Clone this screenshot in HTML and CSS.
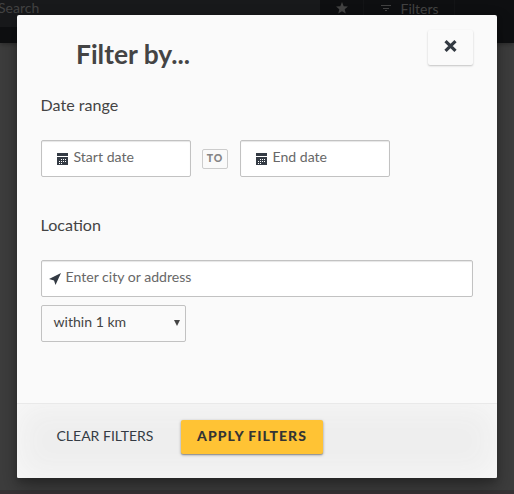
FILE: index.html
```
<!DOCTYPE html>
<html lang="en">
<head>
<meta charset="utf-8">
<title>Filters</title>
<link rel="stylesheet" href="styles.css">
</head>
<body>
<header class="topbar">
  <div class="search">Search</div>
  <div class="tool star"><svg width="12" height="12" viewBox="0 0 24 24"><path d="M12 0l3.400 8.300L24 9l-6.600 5.700L19.500 23 12 18.500 4.500 23l2.100-8.300L0 9l8.600-.7z"/></svg></div>
  <div class="tool filters"><svg width="10" height="8" viewBox="0 0 10 8"><path d="M0 1h10v1H0zM2 4h6v1H2zM4 6h2v1H4z"/></svg><span>Filters</span></div>
</header>
<div class="bottom-line"></div>
<main class="modal">
  <div class="body">
    <div class="heading">
      <h1>Filter by...</h1>
      <button class="close" aria-label="Close"><svg width="13" height="12" viewBox="0 0 13 12"><path d="M1.500 1.200L11.500 10.800M11.500 1.200L1.500 10.800"/></svg></button>
    </div>
    <h2>Date range</h2>
    <div class="dates">
      <div class="field date"><svg class="cal" width="11" height="12" viewBox="0 0 11 12"><path d="M0 0h11v3H0zM0 4h11v8H0z"/><path class="holes" d="M4 6h1v1H4zM6 6h1v1H6zM8 6h1v1H8zM2 8h1v1H2zM4 8h1v1H4zM6 8h1v1H6zM8 8h1v1H8zM2 10h1v1H2zM4 10h1v1H4z"/></svg><span>Start date</span></div>
      <span class="to">TO</span>
      <div class="field date"><svg class="cal" width="11" height="12" viewBox="0 0 11 12"><path d="M0 0h11v3H0zM0 4h11v8H0z"/><path class="holes" d="M4 6h1v1H4zM6 6h1v1H6zM8 6h1v1H8zM2 8h1v1H2zM4 8h1v1H4zM6 8h1v1H6zM8 8h1v1H8zM2 10h1v1H2zM4 10h1v1H4z"/></svg><span>End date</span></div>
    </div>
    <h2>Location</h2>
    <div class="field place"><svg class="arrow" width="12" height="12" viewBox="0 0 12 12"><path d="M12 0L6.500 12 5 7.400 0 6z"/></svg><span>Enter city or address</span></div>
    <div class="field distance"><span>within 1 km</span><svg width="6" height="6" viewBox="0 0 6 6"><path d="M0 0h6L3 6z"/></svg></div>
  </div>
  <footer>
    <button class="clear">CLEAR FILTERS</button>
    <button class="apply">APPLY FILTERS</button>
  </footer>
</main>
</body>
</html>
```
FILE: styles.css
```
* { box-sizing: border-box; }
body {
  margin: 0;
  width: 514px;
  height: 494px;
  overflow: hidden;
  position: relative;
  background: #3d3d3d;
  color: #444;
  font-family: Lato, sans-serif;
}
.topbar {
  display: flex;
  height: 43px;
  background: #0e0f11;
  color: #424242;
  box-shadow: 0 1px 5px rgba(0, 0, 0, .35);
}
.topbar svg { flex: none; fill: #424242; }
.search {
  flex: none;
  width: 322px;
  height: 27px;
  margin-left: -2px;
  background: #18191b;
  font-size: 14px;
  line-height: 16px;
}
.tool {
  flex: none;
  display: flex;
  height: 27px;
  border-right: 1px solid #131416;
  line-height: 18px;
  font-size: 14px;
}
.star { width: 44px; padding: 2px 0 0 16px; }
.filters { width: 91px; padding-left: 17px; }
.filters svg { margin-top: 4px; }
.filters span { margin-left: 9.500px; }
.bottom-line {
  position: absolute;
  left: 0;
  right: 0;
  bottom: 0;
  height: 4px;
  background: #383235;
  border-top: 1px solid #353535;
}
.modal {
  position: absolute;
  left: 17px;
  top: 15px;
  width: 480px;
  height: 463px;
  display: flex;
  flex-direction: column;
  overflow: hidden;
  border-radius: 2px;
  background: #fafafa;
  box-shadow: 0 10px 20px rgba(0, 0, 0, .3), 0 3px 6px rgba(0, 0, 0, .18);
}
.body { height: 388px; padding: 15px 24px 0; }
.heading { display: flex; justify-content: space-between; height: 65px; }
h1 { margin: 8px 0 0 35px; font-size: 26.400px; line-height: 32px; font-weight: 700; }
button { font-family: inherit; border: 0; padding: 0; background: none; }
.close {
  width: 45px;
  height: 35px;
  display: flex;
  align-items: center;
  justify-content: center;
  padding-bottom: 3px;
  border-radius: 2px;
  box-shadow: 0 1px 2px rgba(0, 0, 0, .22);
}
.close svg { fill: none; stroke: #333a42; stroke-width: 3.200; }
h2 { margin: 0 0 0 -.5px; height: 45px; font-size: 16.100px; line-height: 20px; font-weight: 400; }
.field {
  display: flex;
  height: 37px;
  border: 1px solid #c2c2c2;
  border-radius: 2px;
  background: #fff;
  color: #686868;
  font-size: 14.080px;
  line-height: 32px;
  box-shadow: inset 0 1px 1px rgba(0, 0, 0, .1);
}
.dates { display: flex; height: 75px; }
.date { width: 150px; padding-left: 15px; }
.date span { margin-left: 5.500px; }
.cal { margin-top: 12px; fill: #343b44; }
.holes { fill: #fff; }
.to {
  width: 26px;
  height: 20px;
  margin: 9px 12px 0 11px;
  border: 1px solid #ccc;
  border-radius: 2px;
  color: #858585;
  font-size: 10.500px;
  line-height: 17px;
  font-weight: 900;
  letter-spacing: 1px;
  text-align: center;
}
.place { padding-left: 7px; }
.arrow { margin-top: 12px; fill: #343b44; }
.place span { margin-left: 4.500px; }
.distance {
  width: 145px;
  margin-top: 8px;
  padding: 0 5px 0 11.500px;
  justify-content: space-between;
  background: #fafafa;
  color: #444;
  box-shadow: none;
}
.distance svg { margin-top: 14px; fill: #444; }
footer {
  display: flex;
  height: 75px;
  padding: 16px 0 0 39px;
  border-top: 1px solid #e9e9e9;
  background: #eee;
  box-shadow: inset 0 0 32px #f9f9f9;
}
.clear {
  width: 98px;
  height: 31px;
  padding-left: .5px;
  color: #343b44;
  font-size: 14px;
  text-align: left;
  white-space: nowrap;
}
.apply {
  width: 142px;
  height: 34px;
  margin-left: 27px;
  border-radius: 2px;
  background: #ffc334;
  color: #343434;
  font-size: 14px;
  font-weight: 900;
  letter-spacing: 1px;
  padding: 0 0 3px;
  box-shadow: 0 1px 3px rgba(0, 0, 0, .35), 0 1px 1px rgba(0, 0, 0, .2);
}
```
